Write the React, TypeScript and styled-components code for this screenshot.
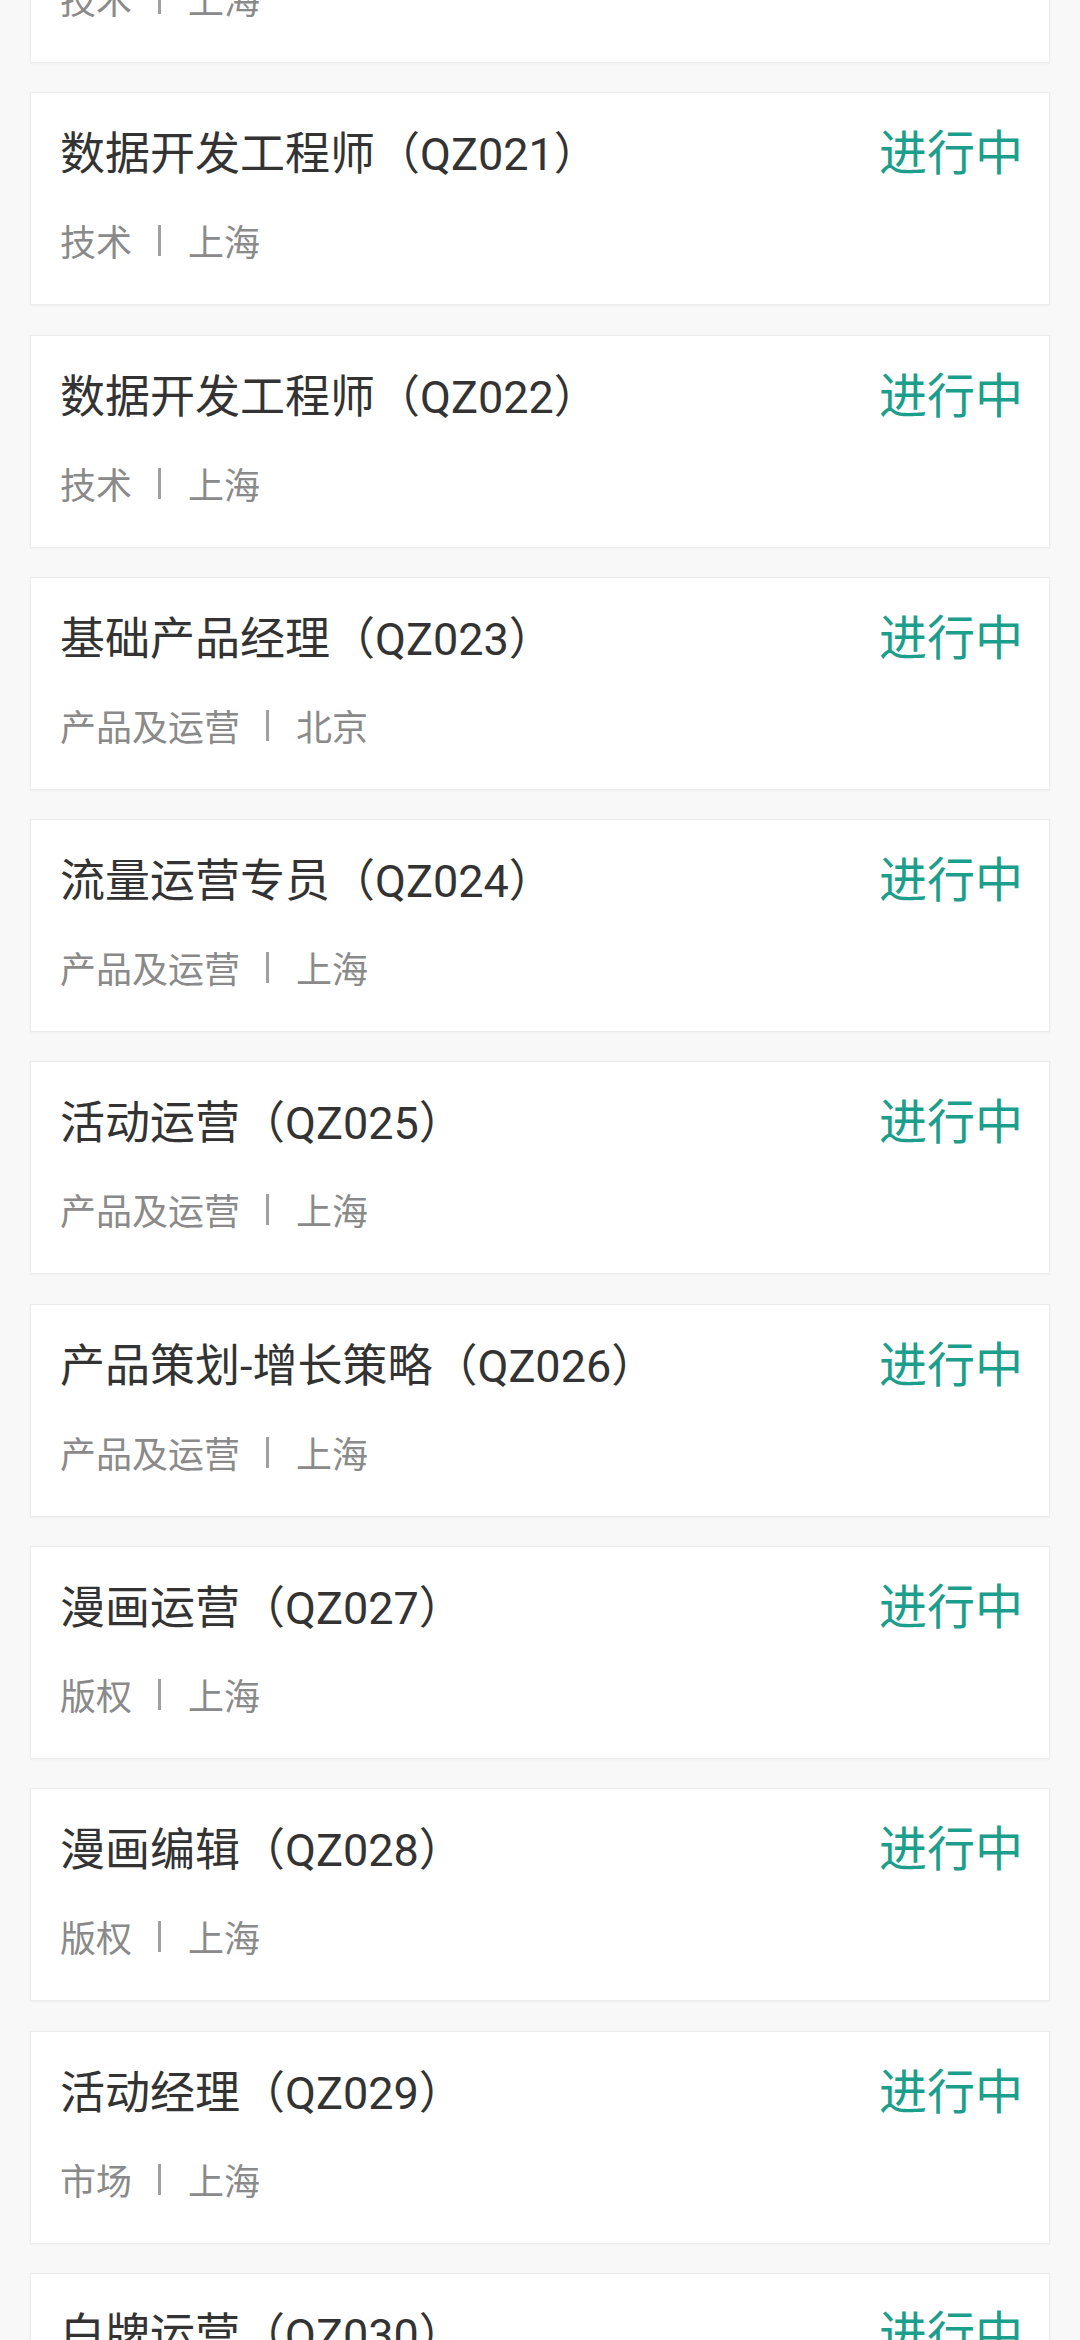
import React from "react";
import styled, { createGlobalStyle } from "styled-components";

const GlobalStyle = createGlobalStyle`
  html, body {
    margin: 0;
    padding: 0;
    background: #f8f8f8;
    overflow: hidden;
  }
  body {
    font-family: Roboto, "Noto Sans CJK SC", sans-serif;
  }
`;

const Screen = styled.div`
  width: 1080px;
  height: 2340px;
  overflow: hidden;
  background: #f8f8f8;
`;

const List = styled.div`
  display: flex;
  flex-direction: column;
  gap: 29.3px;
  margin-top: -150px;
  padding: 0 30px;
`;

const Card = styled.div`
  box-sizing: border-box;
  height: 213px;
  background: #ffffff;
  border: 1px solid #ececec;
  box-shadow: 0 1px 3px rgba(0, 0, 0, 0.04);
  padding: 30px 26px 0 29px;
  display: flex;
  flex-direction: column;
`;

const TopRow = styled.div`
  display: flex;
  justify-content: space-between;
  align-items: flex-start;
`;

const Title = styled.div`
  font-size: 45px;
  line-height: 64px;
  color: #333333;
  white-space: nowrap;
`;

const Status = styled.div`
  font-size: 48px;
  line-height: 62px;
  color: #1b9e8b;
  white-space: nowrap;
`;

const Meta = styled.div`
  display: flex;
  align-items: baseline;
  margin-top: 32px;
  font-size: 36px;
  line-height: 50px;
  color: #8a8a8a;
`;

const Sep = styled.span`
  display: inline-block;
  width: 3px;
  height: 31px;
  margin: 0 27px -3px 26px;
  background: #a0a0a0;
`;

type Job = { title: string; code: string; category: string; city: string };

const jobs: Job[] = [
  { title: "数据开发工程师", code: "QZ020", category: "技术", city: "上海" },
  { title: "数据开发工程师", code: "QZ021", category: "技术", city: "上海" },
  { title: "数据开发工程师", code: "QZ022", category: "技术", city: "上海" },
  { title: "基础产品经理", code: "QZ023", category: "产品及运营", city: "北京" },
  { title: "流量运营专员", code: "QZ024", category: "产品及运营", city: "上海" },
  { title: "活动运营", code: "QZ025", category: "产品及运营", city: "上海" },
  { title: "产品策划-增长策略", code: "QZ026", category: "产品及运营", city: "上海" },
  { title: "漫画运营", code: "QZ027", category: "版权", city: "上海" },
  { title: "漫画编辑", code: "QZ028", category: "版权", city: "上海" },
  { title: "活动经理", code: "QZ029", category: "市场", city: "上海" },
  { title: "白牌运营", code: "QZ030", category: "产品及运营", city: "上海" },
];

export default function App() {
  return (
    <Screen>
      <GlobalStyle />
      <List>
        {jobs.map((j) => (
          <Card key={j.code}>
            <TopRow>
              <Title>
                {j.title}（{j.code}）
              </Title>
              <Status>进行中</Status>
            </TopRow>
            <Meta>
              <span>{j.category}</span>
              <Sep aria-hidden="true" />
              <span>{j.city}</span>
            </Meta>
          </Card>
        ))}
      </List>
    </Screen>
  );
}
